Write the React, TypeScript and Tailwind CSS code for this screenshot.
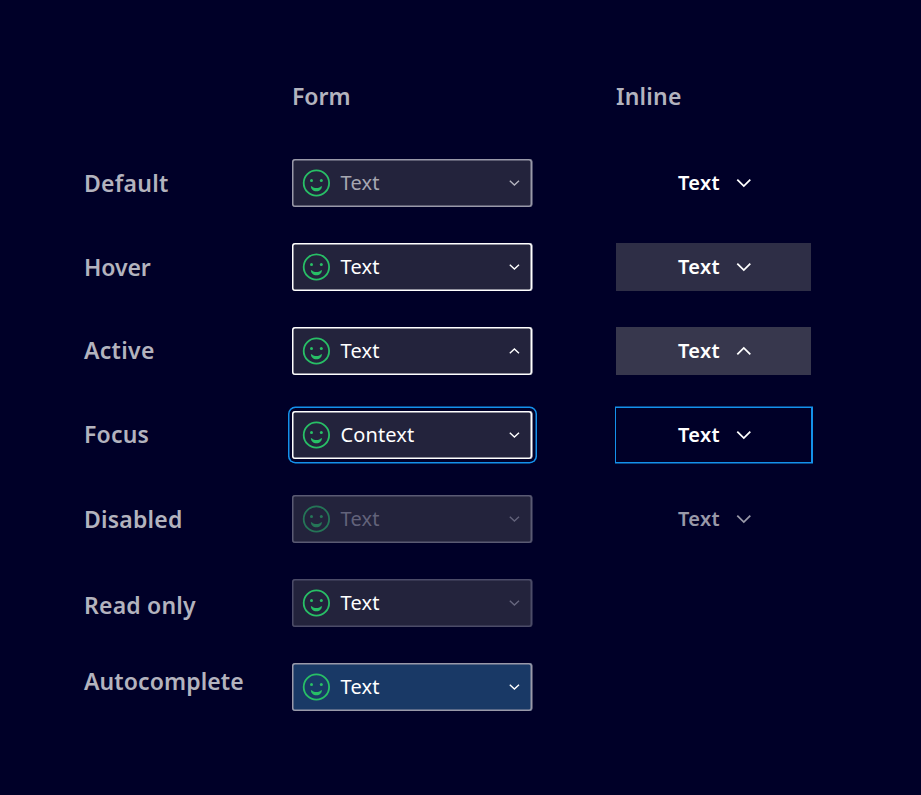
type FieldProps = { text?: string; box: string; color?: string; chevron?: string; smile?: string; up?: boolean };

function Smile({ className }: { className: string }) {
  return (
    <svg className={className} width="28" height="28" viewBox="0 0 28 28" fill="none">
      <circle cx="14.4" cy="14" r="12.7" stroke="currentColor" strokeWidth="1.8" />
      <circle cx="9.5" cy="11.6" r="1.5" fill="currentColor" />
      <circle cx="19.3" cy="11.6" r="1.5" fill="currentColor" />
      <path d="M8.9 16.900C9.300 17 9.700 17.300 10 17.600C11.200 18.700 12.700 19.100 14.400 19.100S17.600 18.700 18.800 17.600C19.100 17.300 19.500 17 19.900 16.900C20 20 17.600 22.300 14.400 22.300S8.800 20 8.900 16.900Z" fill="currentColor" />
    </svg>
  );
}

function SmallChevron({ up, className }: { up?: boolean; className: string }) {
  return (
    <svg className={className} width="12" height="8" viewBox="0 0 12 8" fill="none" stroke="currentColor" strokeWidth="1.4">
      <path d={up ? "M1.8 6.2L6.400 1.9L11 6.200" : "M1.8 1.800L6.400 6.100L11 1.800"} />
    </svg>
  );
}

function LargeChevron({ up }: { up?: boolean }) {
  return (
    <svg width="16" height="10" viewBox="0 0 16 10" fill="none" stroke="currentColor" strokeWidth="1.8">
      <path d={up ? "M1.3 8.300L7.800 1.900L14.300 8.300" : "M1.3 1.700L7.800 8.100L14.300 1.700"} />
    </svg>
  );
}

function Field({ text = "Text", box, color = "text-white", chevron = "text-white", smile = "text-[#28bf66]", up }: FieldProps) {
  return (
    <div className={`flex h-12 w-60 items-center gap-2.5 rounded-[3px] pl-2.5 pr-3 ${box}`}>
      <Smile className={smile} />
      <span className={`flex-1 pl-[0.5px] text-[20px] leading-6 ${text === "Text" ? "tracking-[0.2px]" : "tracking-[0.1px]"} ${color}`}>{text}</span>
      <SmallChevron up={up} className={chevron} />
    </div>
  );
}

function Inline({ color = "text-white", box = "h-12", up }: { box?: string; color?: string; up?: boolean }) {
  return (
    <div className={`flex w-[195px] items-center justify-center gap-4 pl-[3px] ${box} ${color}`}>
      <span className="text-[20px] font-semibold leading-6 tracking-[0.4px]">Text</span>
      <LargeChevron up={up} />
    </div>
  );
}

const rows = [
  { label: "Default", style: "tracking-[0.25px]", field: <Field box="bg-[#23233c] shadow-[inset_0_0_0_1.5px_#9999a9,0.5px_0_#9999a9]" color="text-[#a7a7b1]" chevron="text-[#b3b3be]" />, inline: <Inline /> },
  { label: "Hover", style: "tracking-[-0.1px]", field: <Field box="bg-[#23233c] shadow-[inset_0_0_0_1.5px_#fff,0.5px_0_#fff]" />, inline: <Inline box="h-12 bg-[#2e2e46]" /> },
  { label: "Active", style: "pb-0.5 tracking-[0.3px]", field: <Field box="bg-[#23233c] shadow-[inset_0_0_0_1.5px_#fff,0.5px_0_#fff]" up />, inline: <Inline box="h-12 bg-[#37374d]" up /> },
  { label: "Focus", style: "pb-0.5 tracking-[0.2px]", field: <Field text="Context" box="bg-[#23233c] shadow-[inset_0_0_0_1.5px_#fff,0.5px_0_#fff,0.5px_0_0_3px_#000028,0.5px_0_0_4.5px_#1491eb]" />, inline: <Inline box="h-[54px] shadow-[0.5px_0_0_1.5px_#1491eb]" /> },
  { label: "Disabled", style: "tracking-[0.2px]", field: <Field box="bg-[#23233c] shadow-[inset_0_0_0_1.5px_#5a5a73,0.5px_0_#5a5a73]" color="text-[#62627a]" chevron="text-[#62627a]" smile="text-[#257557]" />, inline: <Inline color="text-[#9999a9]" /> },
  { label: "Read only", style: "pt-1 tracking-[0.2px]", field: <Field box="bg-[#23233c] shadow-[inset_0_0_0_1.5px_#4c4c68,0.5px_0_#4c4c68]" chevron="text-[#66667e]" />, inline: null },
  { label: "Autocomplete", style: "pb-3 tracking-[0.1px]", field: <Field box="bg-[#193966] shadow-[inset_0_0_0_1.5px_#9999a9,0.5px_0_#9999a9]" />, inline: null },
];

export default function App() {
  return (
    <main className="h-[795px] w-[921px] overflow-hidden bg-[#000028] pl-[84px] pt-20 font-['Noto_Sans',sans-serif]">
      <div className="grid h-[79px] grid-cols-[208px_324px_195px] text-[23px] font-semibold leading-8 text-[#b3b3be]">
        <div className="col-start-2">Form</div>
        <div className="tracking-[0.2px]">Inline</div>
      </div>
      <div className="flex flex-col gap-9">
        {rows.map((row) => (
          <div key={row.label} className="grid h-12 grid-cols-[208px_324px_195px] grid-rows-[48px] items-center">
            <div className={`text-[23px] font-semibold leading-8 text-[#b3b3be] ${row.style}`}>{row.label}</div>
            {row.field}
            {row.inline}
          </div>
        ))}
      </div>
    </main>
  );
}
